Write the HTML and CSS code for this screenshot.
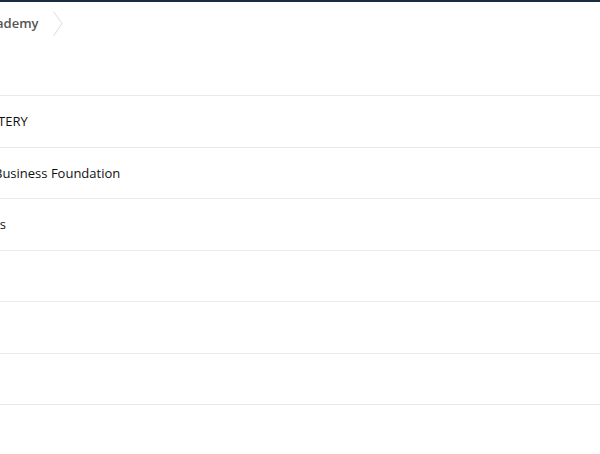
FILE: index.html
```html
<!DOCTYPE html>
<html>
<head>
<meta charset="utf-8">
<link rel="stylesheet" href="styles.css">
</head>
<body>
<div class="topbar"></div>
<div class="page">
  <nav class="crumbs">
    <span class="crumb">Academy</span>
    <svg class="chev" width="12" height="26" viewBox="0 0 12 26"><path d="M1.5 0.5 L10 12.5 L1.5 25" fill="none" stroke="#dcdcdc" stroke-width="1"/></svg>
  </nav>
  <ul class="list">
    <li class="row"><span class="name n1">MASTERY</span></li>
    <li class="row"><span class="name n2">Business Foundation</span></li>
    <li class="row"><span class="name n3">Courses</span></li>
    <li class="row"></li>
    <li class="row"></li>
    <li class="row"></li>
    <li class="row last"></li>
  </ul>
</div>
</body>
</html>
```
FILE: styles.css
```css
html, body {
  margin: 0;
  padding: 0;
  background: #fff;
  overflow: hidden;
}
body {
  font-family: "Open Sans", "Noto Sans", sans-serif;
  width: 600px;
  height: 454px;
}
.topbar {
  height: 2px;
  background: #1b2a3e;
}
.page {
  overflow: hidden;
}
.crumbs {
  display: flex;
  align-items: center;
  height: 42px;
  margin-left: -19px;
  gap: 13px;
}
.crumb {
  font-size: 13px;
  font-weight: 600;
  color: #555;
  line-height: 18px;
}
.chev {
  display: block;
  margin-top: 2px;
}
.list {
  list-style: none;
  margin: 51px 0 0 0;
  padding: 0;
  border-top: 1px solid #e9e9e9;
}
.row {
  height: 50.5px;
  border-bottom: 1px solid #e9e9e9;
  display: flex;
  align-items: center;
  font-size: 13px;
  color: #111;
  white-space: nowrap;
}
.name {
  display: block;
  line-height: 18px;
}
.n1 { margin-left: -29px; }
.n2 { margin-left: -6px; }
.n3 { margin-left: -43px; }
```
